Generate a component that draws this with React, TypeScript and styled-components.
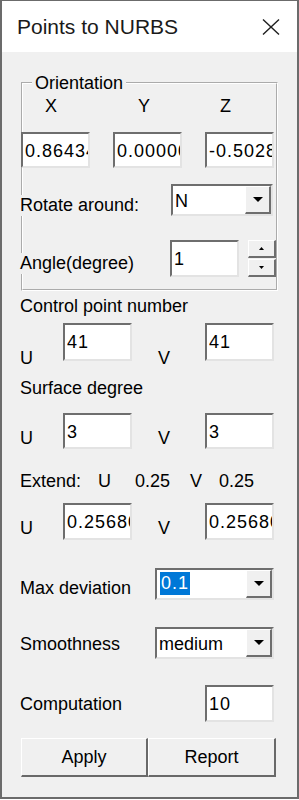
import React from "react";
import styled, { createGlobalStyle } from "styled-components";

const GlobalStyle = createGlobalStyle`
  html, body {
    margin: 0;
    padding: 0;
    background: #ffffff;
  }
  body {
    font-family: "Liberation Sans", Arial, sans-serif;
    font-size: 18px;
    color: #000;
  }
`;

const Window = styled.div`
  box-sizing: border-box;
  width: 299px;
  height: 799px;
  display: flex;
  flex-direction: column;
  border: 2px solid #6b6b6b;
  border-top-width: 1px;
  background: #f0f0f0;
`;

const TitleBar = styled.div`
  flex: 0 0 51px;
  display: flex;
  align-items: center;
  justify-content: space-between;
  padding: 0 17px 0 15px;
  background: #ffffff;
  font-size: 21px;
  color: #1a1a1a;
`;

const CloseIcon = styled.svg`
  display: block;
`;

const Body = styled.div`
  flex: 1 1 auto;
  display: flex;
  flex-direction: column;
  padding-left: 18px;
`;

const Group = styled.fieldset`
  box-sizing: border-box;
  width: 257px;
  min-width: 0;
  margin: 21px 0 0 1px;
  padding: 0 0 12px;
  border: 2px groove #ffffff;
`;

const Legend = styled.legend`
  margin-left: 9px;
  padding: 0 3px;
  font-size: 18px;
  line-height: 20px;
`;

const GroupInner = styled.div`
  display: flex;
  flex-direction: column;
  margin-left: -3px;
`;

const AxisRow = styled.div`
  display: grid;
  grid-template-columns: 93px 82px auto;
  padding-left: 25px;
  margin-top: 3px;
  line-height: 21px;
`;

const CoordRow = styled.div`
  display: flex;
  gap: 23px;
  margin: 15px 0 0 1px;
`;

const Row = styled.div<{ $mt: number; $h: number }>`
  display: flex;
  align-items: flex-start;
  height: ${(p) => p.$h}px;
  margin-top: ${(p) => p.$mt}px;
`;

const PairRow = styled.div<{ $mt: number; $h: number }>`
  display: grid;
  grid-template-columns: 43px 95px 47px 69px;
  align-items: start;
  height: ${(p) => p.$h}px;
  margin-top: ${(p) => p.$mt}px;
`;

const ExtendRow = styled.div`
  display: grid;
  grid-template-columns: 78px 37px 55px 29px auto;
  margin-top: 22px;
  line-height: 21px;
`;

const Label = styled.span<{ $top?: number; $w?: number }>`
  flex: 0 0 ${(p) => (p.$w ? `${p.$w}px` : "auto")};
  margin-top: ${(p) => p.$top ?? 0}px;
  line-height: 21px;
  white-space: nowrap;
  background: #f0f0f0;
`;

const Heading = styled.div<{ $mt: number }>`
  margin-top: ${(p) => p.$mt}px;
  line-height: 21px;
`;

const Field = styled.input<{ $w?: number; $h?: number }>`
  box-sizing: border-box;
  width: ${(p) => p.$w ?? 69}px;
  height: ${(p) => p.$h ?? 37}px;
  margin: 0;
  padding: 7px 0 ${(p) => (p.$h ?? 37) - 31}px 2px;
  border: 2px solid;
  border-color: #6e6e6e #e3e3e3 #e3e3e3 #6e6e6e;
  background: #ffffff;
  font: 18px/20px "Liberation Sans", Arial, sans-serif;
  letter-spacing: 1px;
  color: #000;
  outline: none;
`;

const Combo = styled.div<{ $w: number }>`
  box-sizing: border-box;
  flex: 0 0 ${(p) => p.$w}px;
  height: 32px;
  display: flex;
  border: 2px solid;
  border-color: #6e6e6e #e3e3e3 #e3e3e3 #6e6e6e;
  background: #ffffff;
`;

const ComboValue = styled.div`
  flex: 1 1 auto;
  padding: 5px 0 0 2px;
  line-height: 20px;
`;

const Highlight = styled.span`
  display: block;
  width: 30px;
  height: 23px;
  margin: -3px 0 0 1px;
  padding-left: 1px;
  box-sizing: border-box;
  line-height: 23px;
  letter-spacing: 1px;
  background: #0078d7;
  color: #ffffff;
`;

const DropButton = styled.div`
  box-sizing: border-box;
  flex: 0 0 26px;
  display: flex;
  align-items: center;
  justify-content: center;
  border-style: solid;
  border-width: 1px 2px 2px 1px;
  border-color: #ffffff #6e6e6e #6e6e6e #ffffff;
  background: #f0f0f0;
`;

const Spin = styled.div`
  display: flex;
  flex-direction: column;
  gap: 1px;
  margin-left: 9px;
  width: 28px;
`;

const SpinButton = styled.div`
  box-sizing: border-box;
  height: 18px;
  display: flex;
  align-items: center;
  justify-content: center;
  border-style: solid;
  border-width: 1px 2px 2px 1px;
  border-color: #ffffff #6e6e6e #6e6e6e #ffffff;
  background: #f0f0f0;
`;

const ButtonRow = styled.div`
  display: flex;
  margin: 16px 0 0 1px;
`;

const Button = styled.button<{ $w: number }>`
  box-sizing: border-box;
  width: ${(p) => p.$w}px;
  height: 39px;
  margin: 0;
  padding: 0;
  border-style: solid;
  border-width: 1px 2px 2px 1px;
  border-color: #ffffff #696969 #696969 #ffffff;
  background: #f0f0f0;
  font: 18px "Liberation Sans", Arial, sans-serif;
  color: #000;
`;

const Arrow: React.FC<{ up?: boolean; small?: boolean }> = ({ up, small }) => {
  const w = small ? 5 : 10;
  const h = small ? 3 : 5;
  const pts = up ? `0,${h} ${w},${h} ${w / 2},0` : `0,0 ${w},0 ${w / 2},${h}`;
  return (
    <svg width={w} height={h} viewBox={`0 0 ${w} ${h}`}>
      <polygon points={pts} fill="#000" />
    </svg>
  );
};

const DropCombo: React.FC<{ width: number; children: React.ReactNode }> = ({
  width,
  children,
}) => (
  <Combo $w={width}>
    <ComboValue>{children}</ComboValue>
    <DropButton>
      <Arrow />
    </DropButton>
  </Combo>
);

export default function App() {
  return (
    <>
      <GlobalStyle />
      <Window>
        <TitleBar>
          <span>Points to NURBS</span>
          <CloseIcon width="18" height="16" viewBox="0 0 18 16">
            <path d="M1 0.5 L17 15.5 M17 0.5 L1 15.5" stroke="#1f1f1f" strokeWidth="1.4" />
          </CloseIcon>
        </TitleBar>
        <Body>
          <Group>
            <Legend>Orientation</Legend>
            <GroupInner>
              <AxisRow>
                <span>X</span>
                <span>Y</span>
                <span>Z</span>
              </AxisRow>
              <CoordRow>
                <Field $h={36} readOnly defaultValue="0.864348" />
                <Field $h={36} readOnly defaultValue="0.000000" />
                <Field $h={36} readOnly defaultValue="-0.502835" />
              </CoordRow>
              <Row $mt={16} $h={32}>
                <Label $w={151} $top={11}>Rotate around:</Label>
                <DropCombo width={102}>N</DropCombo>
              </Row>
              <Row $mt={24} $h={37}>
                <Label $w={150} $top={13}>Angle(degree)</Label>
                <Field readOnly defaultValue="1" />
                <Spin>
                  <SpinButton>
                    <Arrow up small />
                  </SpinButton>
                  <SpinButton>
                    <Arrow small />
                  </SpinButton>
                </Spin>
              </Row>
            </GroupInner>
          </Group>

          <Heading $mt={5}>Control point number</Heading>
          <PairRow $mt={6} $h={38}>
            <Label $top={25}>U</Label>
            <Field $h={38} readOnly defaultValue="41" />
            <Label $top={25}>V</Label>
            <Field $h={38} readOnly defaultValue="41" />
          </PairRow>

          <Heading $mt={17}>Surface degree</Heading>
          <PairRow $mt={14} $h={36}>
            <Label $top={15}>U</Label>
            <Field $h={36} readOnly defaultValue="3" />
            <Label $top={15}>V</Label>
            <Field $h={36} readOnly defaultValue="3" />
          </PairRow>

          <ExtendRow>
            <span>Extend:</span>
            <span>U</span>
            <span>0.25</span>
            <span>V</span>
            <span>0.25</span>
          </ExtendRow>
          <PairRow $mt={11} $h={37}>
            <Label $top={15}>U</Label>
            <Field readOnly defaultValue="0.256804" />
            <Label $top={15}>V</Label>
            <Field readOnly defaultValue="0.256804" />
          </PairRow>

          <Row $mt={28} $h={32}>
            <Label $w={135} $top={10}>Max deviation</Label>
            <DropCombo width={119}>
              <Highlight>0.1</Highlight>
            </DropCombo>
          </Row>

          <Row $mt={27} $h={32}>
            <Label $w={135} $top={7}>Smoothness</Label>
            <DropCombo width={119}>medium</DropCombo>
          </Row>

          <Row $mt={26} $h={37}>
            <Label $w={185} $top={9}>Computation</Label>
            <Field readOnly defaultValue="10" />
          </Row>

          <ButtonRow>
            <Button $w={127}>Apply</Button>
            <Button $w={128}>Report</Button>
          </ButtonRow>
        </Body>
      </Window>
    </>
  );
}
